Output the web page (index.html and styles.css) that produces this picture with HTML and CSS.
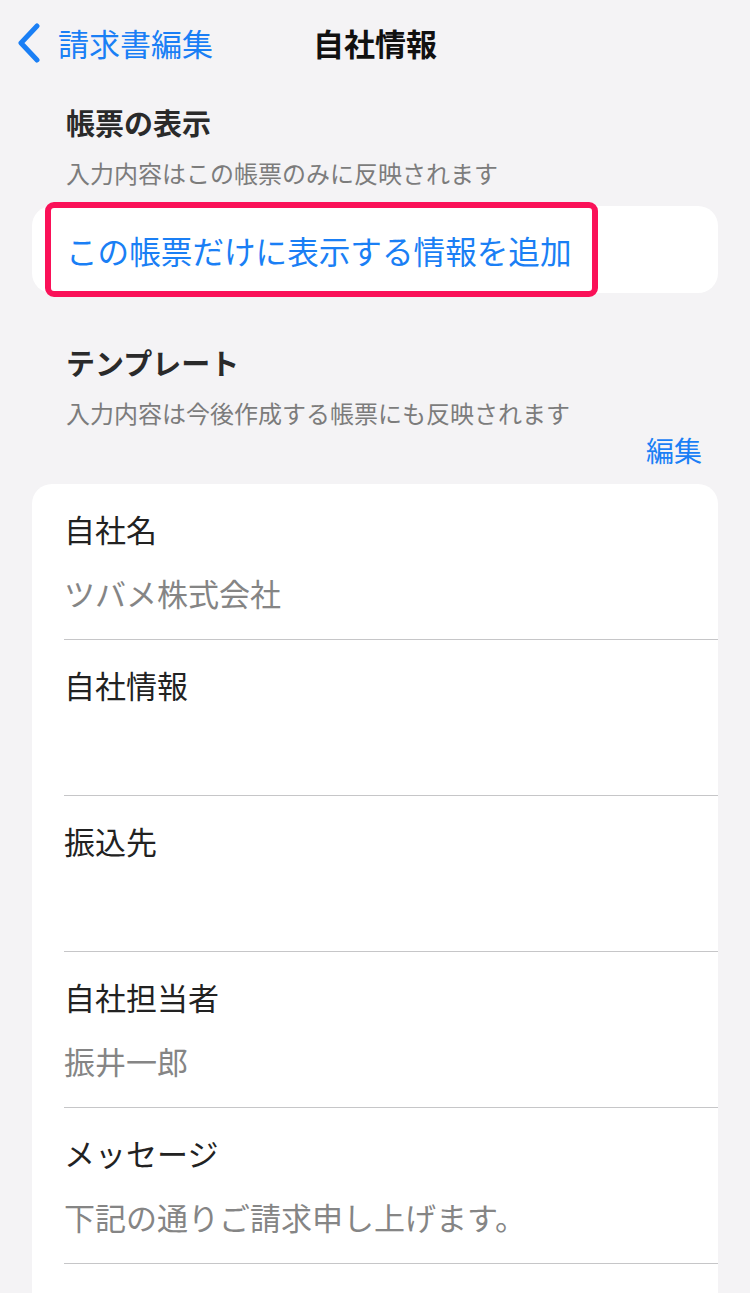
FILE: index.html
```html
<!DOCTYPE html>
<html lang="ja">
<head>
<meta charset="utf-8">
<link rel="stylesheet" href="styles.css">
</head>
<body>
<div class="screen">
  <header class="nav">
    <div class="nav-left">
      <svg class="chev" width="24" height="40" viewBox="0 0 24 40"><path d="M20 3 L4 20 L20 37" fill="none" stroke="#1a7ff5" stroke-width="5" stroke-linecap="round" stroke-linejoin="round"/></svg>
      <span class="back">請求書編集</span>
    </div>
    <div class="nav-title">自社情報</div>
    <div class="nav-right"></div>
  </header>

  <section class="sec sec-first">
    <h2 class="sec-title">帳票の表示</h2>
    <p class="sec-sub">入力内容はこの帳票のみに反映されます</p>
  </section>
  <div class="card card-link">
    <span class="link">この帳票だけに表示する情報を追加</span>
    <div class="highlight"></div>
  </div>

  <section class="sec sec-second">
    <h2 class="sec-title">テンプレート</h2>
    <p class="sec-sub">入力内容は今後作成する帳票にも反映されます</p>
    <div class="edit-row"><span class="edit">編集</span></div>
  </section>

  <div class="card list">
    <div class="row"><div class="label">自社名</div><div class="value">ツバメ株式会社</div></div>
    <div class="row"><div class="label">自社情報</div><div class="value">&nbsp;</div></div>
    <div class="row"><div class="label">振込先</div><div class="value">&nbsp;</div></div>
    <div class="row"><div class="label">自社担当者</div><div class="value">振井一郎</div></div>
    <div class="row"><div class="label">メッセージ</div><div class="value">下記の通りご請求申し上げます。</div></div>
    <div class="row"><div class="label">&nbsp;</div><div class="value">&nbsp;</div></div>
  </div>
</div>
</body>
</html>
```

FILE: styles.css
```css
html, body {
  margin: 0;
  padding: 0;
  background: #f4f3f5;
  overflow: hidden;
}
body {
  font-family: "Noto Sans CJK JP", "Noto Sans", sans-serif;
  color: #222;
}
.screen {
  width: 750px;
  height: 1293px;
  overflow: hidden;
}
.nav {
  display: grid;
  grid-template-columns: 1fr auto 1fr;
  align-items: center;
  height: 86px;
}
.nav-left {
  display: flex;
  align-items: center;
  padding-left: 17px;
  gap: 17px;
}
.chev { display: block; }
.back {
  font-size: 31px;
  color: #1a7ff5;
  line-height: 40px;
}
.nav-title {
  font-size: 31px;
  font-weight: 700;
  color: #111;
  line-height: 40px;
}
.sec {
  padding: 0 66px;
}
.sec-first { padding-top: 16px; }
.sec-second { padding-top: 49px; }
.sec-title {
  margin: 0;
  font-size: 29px;
  font-weight: 700;
  line-height: 40px;
  color: #2a2a2a;
}
.sec-sub {
  margin: 16px 0 0;
  font-size: 24px;
  line-height: 30px;
  color: #7c7c7c;
}
.card {
  background: #fff;
  margin: 0 32px;
  border-radius: 20px;
}
.card-link {
  position: relative;
  margin-top: 18px;
  height: 87px;
  display: flex;
  align-items: center;
  padding-left: 34px;
}
.link {
  font-size: 31.6px;
  color: #1a7ff5;
  line-height: 40px;
}
.highlight {
  position: absolute;
  left: 13px;
  top: -4px;
  width: 553px;
  height: 95px;
  box-sizing: border-box;
  border: 6px solid #fa1158;
  border-radius: 9px;
}
.edit-row {
  display: flex;
  justify-content: flex-end;
  margin-right: -18px;
  margin-top: 4px;
}
.edit {
  font-size: 28px;
  line-height: 36px;
  color: #1a7ff5;
}
.list {
  margin-top: 16px;
  padding-left: 32px;
}
.row {
  height: 155px;
  box-sizing: content-box;
  border-bottom: 1px solid #c6c6c8;
}
.label {
  padding-top: 25px;
  font-size: 31px;
  line-height: 40px;
  color: #222;
}
.value {
  margin-top: 24px;
  font-size: 31px;
  line-height: 40px;
  color: #858585;
}
```
